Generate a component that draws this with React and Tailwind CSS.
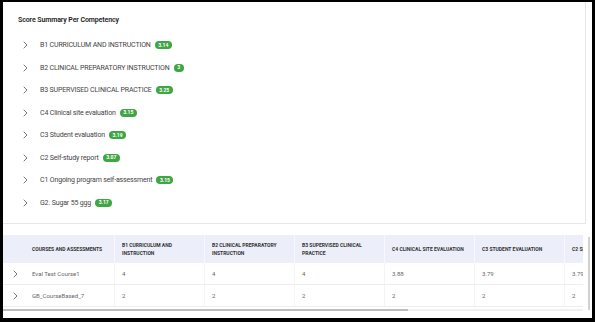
import React from 'react';

const competencies = [
  { name: 'B1 CURRICULUM AND INSTRUCTION', score: '3.14' },
  { name: 'B2 CLINICAL PREPARATORY INSTRUCTION', score: '3' },
  { name: 'B3 SUPERVISED CLINICAL PRACTICE', score: '3.25' },
  { name: 'C4 Clinical site evaluation', score: '3.15' },
  { name: 'C3 Student evaluation', score: '3.19' },
  { name: 'C2 Self-study report', score: '3.07' },
  { name: 'C1 Ongoing program self-assessment', score: '3.15' },
  { name: 'G2. Sugar 55 ggg', score: '3.17' },
];

const columns = [
  ['B1 CURRICULUM AND', 'INSTRUCTION'],
  ['B2 CLINICAL PREPARATORY', 'INSTRUCTION'],
  ['B3 SUPERVISED CLINICAL', 'PRACTICE'],
  ['C4 CLINICAL SITE EVALUATION'],
  ['C3 STUDENT EVALUATION'],
  ['C2 SELF-STUDY REPORT'],
];

const rows = [
  { name: 'Eval Test Course1', values: ['4', '4', '4', '3.88', '3.79', '3.79'] },
  { name: 'GB_CourseBased_7', values: ['2', '2', '2', '2', '2', '2'] },
];

const Chevron = () => (
  <svg width="5" height="8" viewBox="0 0 5 8" fill="none">
    <path d="M1 1 L4 4 L1 7" stroke="#555" strokeWidth="0.8" strokeLinecap="round" strokeLinejoin="round" />
  </svg>
);

const App = () => {
  return (
    <div className="w-[595px] h-[322px] bg-white border-black border-t-[2px] border-l-[3px] border-r-[3px] border-b-[4px] flex flex-col overflow-hidden font-['Roboto',sans-serif]">
      {/* Competency summary card */}
      <div className="w-[583px] h-[222px] shrink-0 border-r border-b border-[#e6e6e6]">
        <div className="pt-[12px] pl-[15px] h-[24px] text-[7px] leading-[12px] font-semibold text-[#222] tracking-[-0.1px]">
          Score Summary Per Competency
        </div>
        <div className="mt-[8px]">
          {competencies.map((c) => (
            <div key={c.name} className="h-[22.5px] flex items-center pl-[20px]">
              <Chevron />
              <span className="ml-[12px] text-[7px] text-[#444] tracking-[-0.15px]">{c.name}</span>
              <span className="ml-[4px] h-[8px] px-[3.5px] rounded-full bg-[#3ea643] text-white text-[5px] font-bold flex items-center">
                {c.score}
              </span>
            </div>
          ))}
        </div>
      </div>

      <div className="h-[11px] shrink-0" />

      {/* Course table */}
      <div className="flex">
        <div className="w-[580px] overflow-hidden">
          <div className="flex h-[28px] bg-[#eceef9] text-[5px] font-bold text-[#333] leading-[8px]">
            <div className="w-[112px] shrink-0 pl-[29px] flex items-center border-r border-[#f7f7fd]">
              COURSES AND ASSESSMENTS
            </div>
            {columns.map((col) => (
              <div key={col[0]} className="w-[90px] shrink-0 px-[7px] flex flex-col justify-center border-r border-[#f7f7fd] whitespace-nowrap overflow-hidden">
                {col.map((l) => (
                  <span key={l}>{l}</span>
                ))}
              </div>
            ))}
          </div>
          {rows.map((r) => (
            <div key={r.name} className="flex h-[22px] border-b border-[#eeeeee] text-[6px] text-[#666]">
              <div className="w-[112px] shrink-0 flex items-center border-r border-[#f4f4f4]">
                <div className="w-[29px] pl-[10px]">
                  <Chevron />
                </div>
                <span>{r.name}</span>
              </div>
              {r.values.map((v, i) => (
                <div key={i} className="w-[90px] shrink-0 px-[7px] flex items-center border-r border-[#f4f4f4]">
                  {v}
                </div>
              ))}
            </div>
          ))}
          <div className="mt-[2px] h-[2px] bg-[#f0f0f0] flex">
            <div className="w-[405px] h-full bg-[#bdbdbd]" />
          </div>
        </div>
        <div className="ml-[5px] mt-[2px] w-[2px] h-[73px] bg-[#d2d2d2]" />
      </div>
    </div>
  );
};

export default App;
